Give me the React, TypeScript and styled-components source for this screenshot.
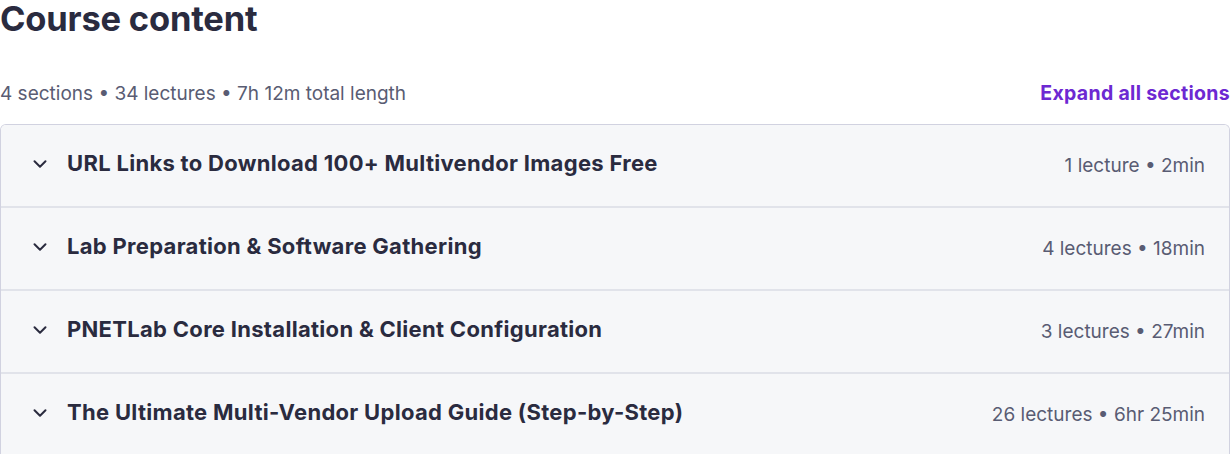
import styled, { createGlobalStyle } from "styled-components";

const sections = [
  { title: "URL Links to Download 100+ Multivendor Images Free", meta: "1 lecture • 2min" },
  { title: "Lab Preparation & Software Gathering", meta: "4 lectures • 18min" },
  { title: "PNETLab Core Installation & Client Configuration", meta: "3 lectures • 27min" },
  { title: "The Ultimate Multi-Vendor Upload Guide (Step-by-Step)", meta: "26 lectures • 6hr 25min" },
];

const Chevron = () => (
  <svg width="22" height="22" viewBox="0 0 24 24" fill="none" stroke="currentColor" strokeWidth="2.2" strokeLinecap="round" strokeLinejoin="round">
    <path d="M6 9l6 6 6-6" />
  </svg>
);

const App = () => {
  return (
    <>
      <GlobalStyle />
      <StyledWrapper>
        <StyledHeading>Course content</StyledHeading>

        <StyledSummaryRow>
          <StyledSummary>4 sections • 34 lectures • 7h 12m total length</StyledSummary>
          <StyledExpandButton>Expand all sections</StyledExpandButton>
        </StyledSummaryRow>

        <StyledList>
          {sections.map((section) => (
            <StyledSection key={section.title}>
              <StyledChevron>
                <Chevron />
              </StyledChevron>
              <StyledSectionTitle>{section.title}</StyledSectionTitle>
              <StyledMeta>{section.meta}</StyledMeta>
            </StyledSection>
          ))}
        </StyledList>
      </StyledWrapper>
    </>
  );
};

const GlobalStyle = createGlobalStyle`
  body {
    margin: 0;
    background: #ffffff;
    font-family: Inter, "Noto Sans", sans-serif;
  }
`;

const StyledWrapper = styled.div`
  width: 1230px;
  display: flex;
  flex-direction: column;
`;

const StyledHeading = styled.h2`
  margin: 0;
  font-size: 34.5px;
  line-height: 38px;
  font-weight: 700;
  letter-spacing: -0.2px;
  color: #2a2b3f;
`;

const StyledSummaryRow = styled.div`
  margin-top: 38px;
  height: 34px;

  display: flex;
  justify-content: space-between;
  align-items: center;
`;

const StyledSummary = styled.span`
  font-size: 19px;
  color: #595c73;
`;

const StyledExpandButton = styled.button`
  padding: 0;
  border: none;
  background: none;

  font-family: inherit;
  font-size: 19.5px;
  font-weight: 700;
  letter-spacing: 0.3px;
  color: #6d28d2;
  cursor: pointer;
`;

const StyledList = styled.div`
  margin-top: 14px;
  border: 1px solid #d1d2e0;
  border-bottom: none;
  border-radius: 6px 6px 0 0;
  overflow: hidden;
`;

const StyledSection = styled.div`
  height: 81px;
  padding: 0 24px 0 28px;

  display: flex;
  align-items: center;

  background: #f6f7f9;
  border-bottom: 2px solid #e1e3ea;

  &:last-child {
    border-bottom: none;
  }
`;

const StyledChevron = styled.span`
  width: 38px;
  margin-bottom: 4px;
  display: flex;
  align-items: center;
  color: #2a2b3f;
`;

const StyledSectionTitle = styled.span`
  flex: 1;
  margin-bottom: 5px;
  font-size: 22px;
  font-weight: 700;
  letter-spacing: 0.3px;
  color: #2a2b3f;
`;

const StyledMeta = styled.span`
  font-size: 19px;
  color: #595c73;
`;

export default App;
